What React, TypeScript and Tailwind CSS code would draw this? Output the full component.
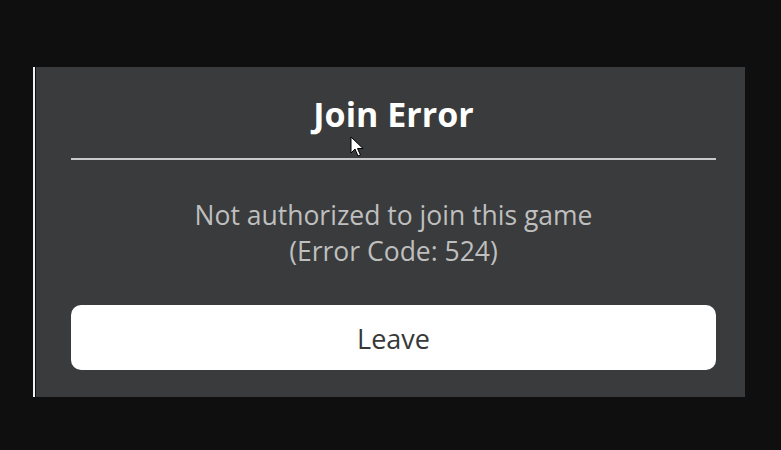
export default function App() {
  return (
    <div className="relative h-[450px] w-[781px] overflow-hidden bg-[#0f0f0f] pl-[33px] pt-[67px] font-['Open_Sans',sans-serif]">
      <div className="flex h-[330px] w-[712px] border-l-[2px] border-[#f2f2f2]">
        <div className="ml-[1px] flex flex-1 flex-col bg-[#393b3c] pl-[35px] pr-[29px]">
          <h1 className="pt-[29px] text-center text-[34px] font-bold leading-[36px] text-white">
            Join Error
          </h1>
          <div className="mt-[26px] h-[2px] bg-[#c9c9c9]" />
          <p className="mt-[37px] text-center text-[26.5px] leading-[36px] text-[#bfbfbf]">
            Not authorized to join this game
            <br />
            (Error Code: 524)
          </p>
          <button
            type="button"
            className="mt-[36px] h-[65px] rounded-[10px] bg-white pt-[4px] text-[27px] text-[#363839]"
          >
            Leave
          </button>
        </div>
      </div>

      {/* mouse pointer */}
      <svg
        className="absolute left-[350px] top-[136px]"
        width="14"
        height="22"
        viewBox="0 0 14 22"
        aria-hidden
      >
        <path
          d="M1 1 L1 17 L5 13 L8 20 L10.5 19 L7.5 12.5 L13 12.5 Z"
          fill="#ffffff"
          stroke="#000000"
          strokeWidth="1"
          strokeLinejoin="round"
        />
      </svg>
    </div>
  )
}
